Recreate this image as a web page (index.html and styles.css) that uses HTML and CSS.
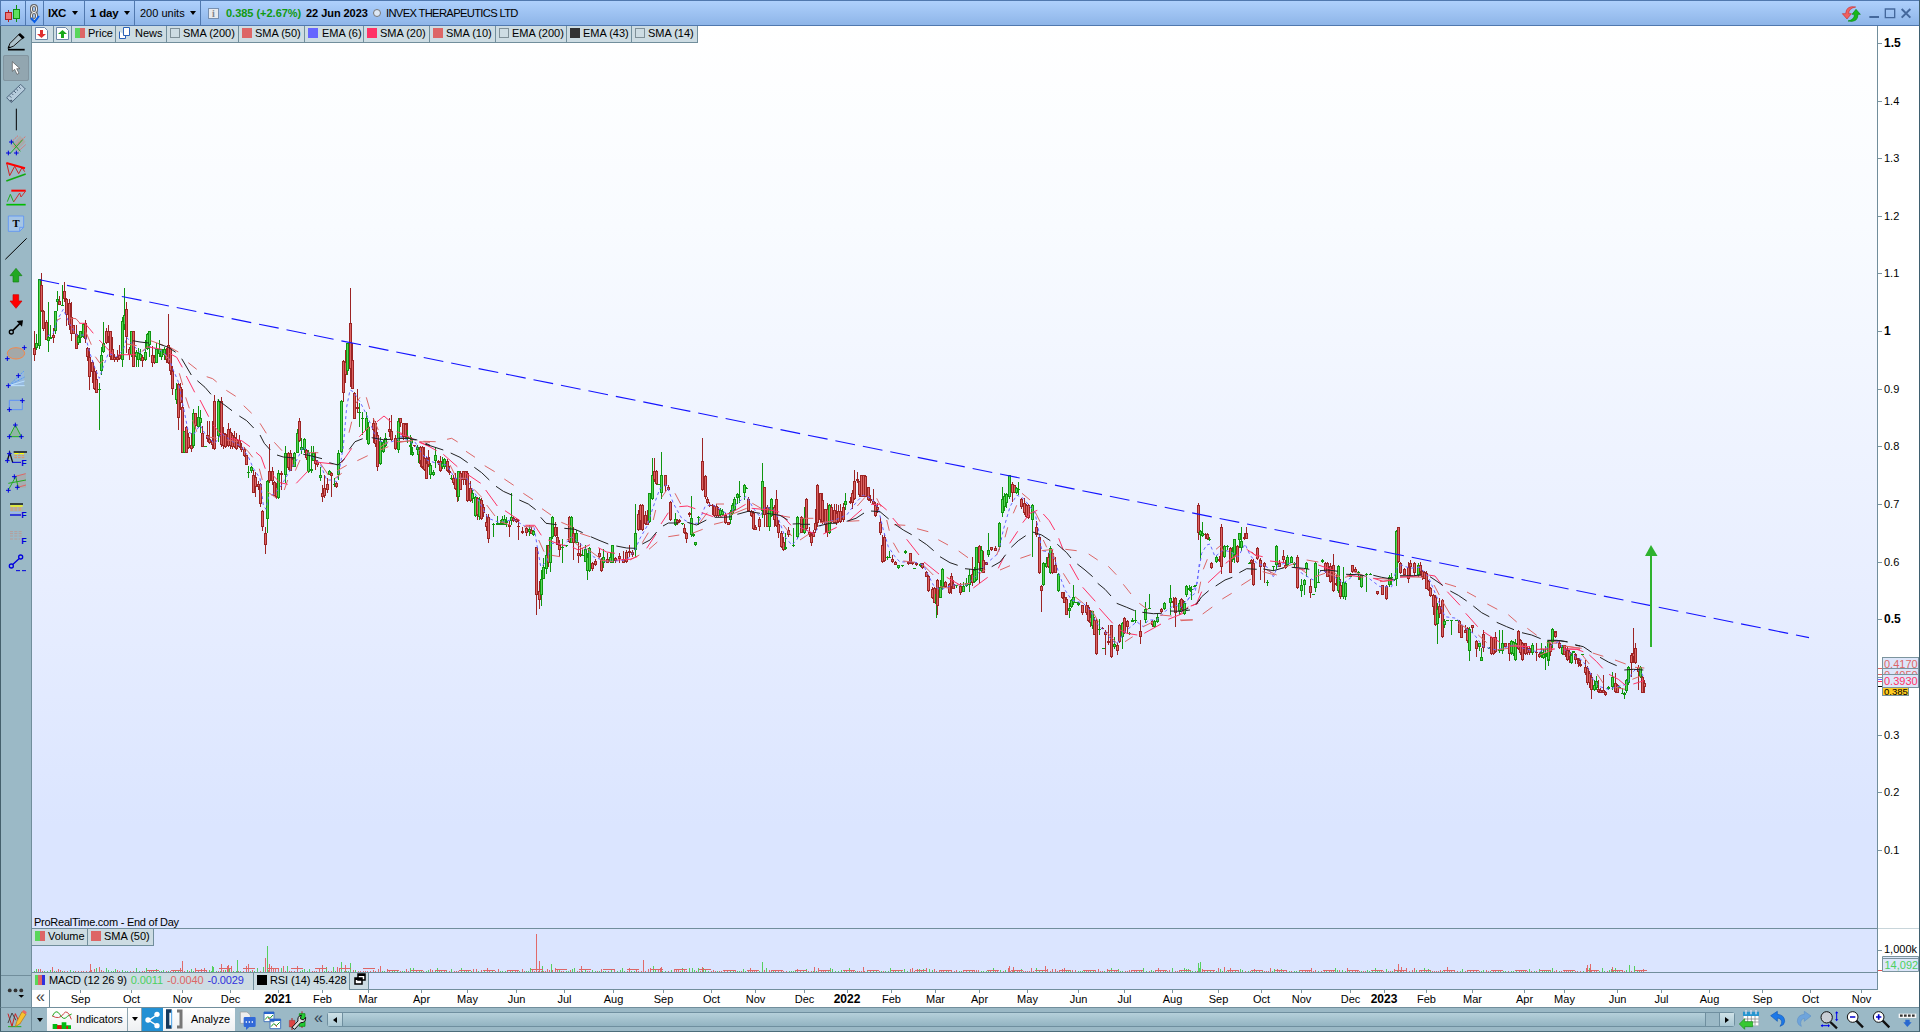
FILE: index.html
```html
<!DOCTYPE html>
<html lang="en">
<head>
<meta charset="utf-8">
<title>IXC - INVEX THERAPEUTICS LTD</title>
<link rel="stylesheet" href="styles.css">
</head>
<body>
<div class="window">
  <header class="titlebar">
    <div class="cell c-candle"><svg width="25" height="25" viewBox="0 0 25 25"><path d="M7.500 9v12" stroke="#b02020"/><path d="M15.500 4v17" stroke="#109010"/><rect x="4.500" y="11.500" width="6" height="7" fill="#ee7777" stroke="#b02020"/><rect x="12.500" y="8.500" width="6" height="9" fill="#5ee05e" stroke="#109010"/></svg></div>
    <div class="cell c-link"><svg width="18" height="25" viewBox="0 0 18 25"><g fill="none" stroke="#666" stroke-width="3"><rect x="5.500" y="4.500" width="5" height="7" rx="2.500"/><rect x="5.500" y="11.500" width="5" height="7" rx="2.500"/></g><g fill="none" stroke="#eee" stroke-width="1"><rect x="5.500" y="4.500" width="5" height="7" rx="2.500"/><rect x="5.500" y="11.500" width="5" height="7" rx="2.500"/></g><path d="M5 17l3.500 4L13 15" fill="none" stroke="#0b5fe8" stroke-width="2"/></svg></div>
    <div class="cell c-sym"><b class="sym">IXC</b><i class="caret"></i></div>
    <div class="cell c-period"><b>1 day</b><i class="caret"></i></div>
    <div class="cell c-units"><span>200 units</span><i class="caret"></i></div>
    <div class="quote"><span class="info">i</span><b class="change">0.385 (+2.67%)</b><b class="date">22 Jun 2023</b><i class="dot"></i><span class="company">INVEX THERAPEUTICS LTD</span></div>
    <div class="winbtns">
      <svg width="116" height="25" viewBox="0 0 348 75"><path d="M59 18Q31 12 29 38H19L33 54L46 38H38Q38 22 59 18" fill="#f06060" stroke="#c83030" stroke-width="2"/><path d="M36 60Q66 66 66 40H73L60 25L48 40H55Q56 56 36 60" fill="#18b818" stroke="#0a8a1a" stroke-width="2"/><path d="M100 48h29" stroke="#44689c" stroke-width="6"/><path d="M148 24h28v26h-28z" fill="none" stroke="#44689c" stroke-width="4"/><path d="M197 24l26 26M223 24l-26 26" stroke="#44689c" stroke-width="6"/></svg>
    </div>
  </header>
  <main class="workspace">
    <nav class="tools">
      <svg viewBox="0 0 96 78"><path d="M24 62h50" stroke="#000" stroke-width="5"/><path d="M24 58l6-15L56 17l11 11L41 51Z" fill="#aec3cc" stroke="#111" stroke-width="3"/><path d="M54 17l6-5 14 13-6 6Z"/><path d="M24 58l2-7 7 5Z"/></svg>
      <svg viewBox="9 0 78 78" class="active"><path d="M37 20v29l7-6 7 15 6-3-7-14h10Z" fill="#fff" stroke="#555" stroke-width="2"/></svg>
      <svg viewBox="0 0 96 78"><path d="M20 50L62 10l14 14L34 65Z" fill="#b6ccdc" stroke="#506880" stroke-width="3"/><path d="M28 44l6 6M35 37l5 5M42 30l6 6M49 24l5 5M56 17l6 6M33 57a2 2 0 1 0 1 0" stroke="#506880" stroke-width="3"/></svg>
      <svg viewBox="0 0 96 78"><path d="M49 5v65" stroke="#000" stroke-width="3"/></svg>
      <svg viewBox="0 0 96 78"><path d="M33 40L60 8 77 26 50 55Z" fill="#aaa"/><path d="M33 28L54 8M42 42L77 10M55 55L77 35" stroke="#e07070" stroke-width="3" stroke-dasharray="6 2"/><path d="M30 62L68 20M36 25l25 30" stroke="#22a822" stroke-width="3"/><path d="M34 20v14M27 27h14M25 53v14M18 60h14M49 53v14M42 60h14" stroke="#0000e0" stroke-width="3"/></svg>
      <svg viewBox="0 0 96 78"><path d="M20 12l9 38L44 22l12 22L66 26l8 12" fill="none" stroke="#c22" stroke-width="3"/><path d="M19 12l56 16" stroke="#f00" stroke-width="6"/><path d="M19 66l58-21" stroke="#1a1" stroke-width="5"/></svg>
      <svg viewBox="0 0 96 78"><path d="M34 17h43" stroke="#f00" stroke-width="6"/><path d="M19 59h58" stroke="#0b0" stroke-width="5"/><path d="M22 50l9-22 10 23" fill="none" stroke="#2a2" stroke-width="3"/><path d="M41 51l18-27 4 12 14-18" fill="none" stroke="#c33" stroke-width="3"/></svg>
      <svg viewBox="0 0 96 78"><path d="M25 15h46v34l-12 12H25Z" fill="#a5c5e5" stroke="#5d94f5" stroke-width="2.500"/><path d="M59 61V49h12" fill="none" stroke="#5d94f5" stroke-width="2.500"/><text x="48" y="49" class="tool-t">T</text></svg>
      <svg viewBox="0 0 96 78"><path d="M16 67L80 4" stroke="#000" stroke-width="3"/></svg>
      <svg viewBox="0 0 96 78"><path d="M48 16L66 38H56V57H39V38H30Z" fill="#22a822" stroke="#168016" stroke-width="2"/></svg>
      <svg viewBox="0 0 96 78"><path d="M48 58L30 36H39V17H56V36H66Z" fill="#f00" stroke="#c00" stroke-width="2"/></svg>
      <svg viewBox="0 0 96 78"><circle cx="34" cy="51" r="6" fill="none" stroke="#000" stroke-width="4"/><path d="M39 46L60 25" stroke="#000" stroke-width="5"/><path d="M50 18l19-2-3 19Z"/></svg>
      <svg viewBox="0 0 96 78"><ellipse cx="48" cy="37" rx="26" ry="17" fill="#a4a8a8" stroke="#f4874b" stroke-width="3"/><path class="plus" d="M73 13v14M66 20h14M22 46v14M15 53h14"/></svg>
      <svg viewBox="0 0 96 78"><path d="M26 56L72 11V56Z" fill="#94b8ea" opacity=".65"/><path d="M26 56L72 12M26 56L74 30" stroke="#5599f5" stroke-width="3" stroke-dasharray="7 3"/><path d="M26 56L74 42M26 56H74" stroke="#bce0ff" stroke-width="3"/><path class="plus" d="M55 19v14M48 26h14M25 49v14M18 56h14"/></svg>
      <svg viewBox="0 0 96 78"><path d="M28 22h39v28H28Z" fill="#9ebbd0" stroke="#5f91f5" stroke-width="3"/><path class="plus" d="M67 16v14M60 23h14M28 43v14M21 50h14"/></svg>
      <svg viewBox="0 0 96 78"><path d="M46 18L64 53H28Z" fill="#8fb5a5" stroke="#22b022" stroke-width="3"/><path class="plus" d="M46 11v14M39 18h14M28 46v14M21 53h14M64 46v14M57 53h14"/></svg>
      <svg viewBox="0 0 96 78"><path d="M22 48L29 22 38 52" fill="none" stroke="#111" stroke-width="4"/><path d="M41 21h40" stroke="#000" stroke-width="4"/><path d="M43 26h33" stroke="#ff0" stroke-width="4" stroke-dasharray="13 3"/><path d="M43 32h33M43 38h33" stroke="#e49560" stroke-width="3" stroke-dasharray="8 3"/><path d="M36 52h27" stroke="#00d" stroke-width="3"/><path class="plus" d="M28 19v14M21 26h14M22 40v14M15 47h14"/><text class="tool-f" x="64" y="63">F</text></svg>
      <svg viewBox="0 0 96 78"><path d="M45 17L78 7V50L50 50Z" fill="#aaa" opacity=".7"/><path d="M43 17L77 8M50 50L78 42" stroke="#d66" stroke-width="3"/><path d="M25 57L47 17 55 50M25 37L78 27" fill="none" stroke="#22a822" stroke-width="3"/><path class="plus" d="M43 10v14M36 17h14M25 51v14M18 58h14M52 42v14M45 49h14"/></svg>
      <svg viewBox="0 0 96 78"><path d="M30 21h39" stroke="#000" stroke-width="4"/><path d="M31 27h37" stroke="#ff0" stroke-width="4"/><path d="M31 33h37M31 39h37" stroke="#f09550" stroke-width="3" stroke-dasharray="9 3"/><path d="M30 47h32" stroke="#9cb2ff" stroke-width="3"/><path d="M30 54h33" stroke="#00d" stroke-width="4"/><text class="tool-f" x="64" y="64">F</text></svg>
      <svg viewBox="0 0 96 78"><path d="M30 26h39M30 32h39M30 39h39M30 48h30" stroke="#b79d98" stroke-width="3" stroke-dasharray="9 4"/><text class="tool-f" x="64" y="63">F</text></svg>
      <svg viewBox="0 0 96 78"><g fill="none" stroke="#00d" stroke-width="4"><circle cx="34" cy="51" r="6"/><circle cx="62" cy="24" r="6"/><path d="M39 46L57 29"/></g><path d="M48 65h12m6 0h12" stroke="#00d" stroke-width="3"/></svg>
      <div class="more"><svg viewBox="0 0 96 100"><g fill="#333"><circle cx="30" cy="45" r="6"/><circle cx="48" cy="45" r="6"/><circle cx="66" cy="45" r="6"/></g><path d="M57 59h18l-9 9Z"/></svg></div>
    </nav>
    <section class="charts">
      <div class="panel price">
        <svg id="price" width="1845" height="903" viewBox="32 26 1845 903"></svg>
        <div class="legend">
          <span class="key w22"><svg width="13" height="13"><path d="M.5.500h9l3 3v9H.5Z" fill="#fff" stroke="#6d87a8"/><path d="M5 3h3v4h3L6.500 11 2 7h3Z" fill="#e03030"/></svg></span>
          <span class="key w18"><svg width="13" height="13"><path d="M.5.500h9l3 3v9H.5Z" fill="#fff" stroke="#6d87a8"/><path d="M5 11h3V7h3L6.500 3 2 7h3Z" fill="#18a818"/></svg></span>
          <span class="key w44"><i class="sw split"></i>Price</span>
          <span class="key w51"><svg width="11" height="13"><path d="M4.500.500h6v8h-6zM.5 4.500v7h6v-3" fill="#fff" stroke="#2a62b8"/></svg>News</span>
          <span class="key w72"><i class="sw none"></i>SMA (200)</span>
          <span class="key w66"><i class="sw salmon"></i>SMA (50)</span>
          <span class="key w58"><i class="sw blue"></i>EMA (6)</span>
          <span class="key w66"><i class="sw pink"></i>SMA (20)</span>
          <span class="key w66"><i class="sw salmon"></i>SMA (10)</span>
          <span class="key w71"><i class="sw none"></i>EMA (200)</span>
          <span class="key w65"><i class="sw dark"></i>EMA (43)</span>
          <span class="key w66"><i class="sw none"></i>SMA (14)</span>
        </div>
        <div class="credit">ProRealTime.com - End of Day</div>
      </div>
      <div class="axis price-axis"><svg id="priceAxis" width="41" height="903" viewBox="1878 26 41 903"></svg></div>
      <div class="panel volume">
        <svg id="volume" width="1845" height="44" viewBox="32 929 1845 44"></svg>
        <div class="legend">
          <span class="key w56"><i class="sw split"></i>Volume</span>
          <span class="key w66"><i class="sw salmon"></i>SMA (50)</span>
        </div>
      </div>
      <div class="axis vol-axis"><svg width="41" height="44" viewBox="1878 929 41 44"><path d="M1878 950.500h4" stroke="#7b949e"/><text x="1884" y="953" class="lbl">1,000k</text><path d="M1878 970.500h4" stroke="#e05050"/><path d="M1882.500 956.500h36v15h-36z" fill="#dde6fa" stroke="#7b949e"/><path d="M1882 958.500h37" stroke="#7b949e"/><text x="1884.500" y="969" class="lbl gr">14,092</text></svg></div>
      <div class="panel collapsed">
        <div class="legend">
          <span class="key macd"><i class="sw tri"></i>MACD (12 26 9)<em class="v1">0.0011</em><em class="v2">-0.0040</em><em class="v3">-0.0029</em></span>
          <span class="key rsi"><i class="sw black"></i>RSI (14) 45.428</span>
          <span class="key w19"><svg width="14" height="13"><path d="M5 1h7v6H5zM2 5h7v6H2z" fill="#fff" stroke="#000" stroke-width="1.500"/><path d="M5 2h7M2 6h7" stroke="#000" stroke-width="2"/></svg></span>
        </div>
      </div>
      <div class="axis"></div>
      <div class="timeaxis"><span class="collapse">«</span><svg id="timeAxis" width="1869" height="17" viewBox="50 990 1869 17"></svg></div>
    </section>
  </main>
  <footer class="bottombar">
    <div class="b-pencil"><svg width="32" height="25" viewBox="0 0 96 75"><path d="M24 59h40" stroke="#2a2" stroke-width="3"/><path d="M24 20l12 38L46 20 60 50" fill="none" stroke="#c22" stroke-width="3"/><path d="M24 48L36 18 48 40" fill="none" stroke="#444" stroke-width="3"/><path d="M46 59l4-15L66 14l12 8L60 50Z" fill="#f8c030" stroke="#b07010" stroke-width="2"/><path d="M66 14l12 8 2-7-9-6Z" fill="#e66"/></svg></div>
    <div class="b-caret gray"><i class="caret"></i></div>
    <div class="b-white ind"><svg width="20" height="22" viewBox="0 0 60 66"><path d="M1 25Q12 0 24 20T46 25L59 18" fill="none" stroke="#2a2" stroke-width="3"/><path d="M1 24Q22 36 34 18T58 34" fill="none" stroke="#c44" stroke-width="3"/><path d="M2 48h14v4h13v-9h14v9h14v11H2Z" fill="#0b1"/><path d="M15 52h14v11H15zM43 54h5v9h-5z" fill="#d11"/></svg><span>Indicators</span></div>
    <div class="b-white b-caret2"><i class="caret"></i></div>
    <div class="b-share"><svg width="21" height="25" viewBox="0 0 63 75"><path d="M44 21L20 37 44 52" fill="none" stroke="#fff" stroke-width="4"/><circle cx="45" cy="19" r="8"/><circle cx="18" cy="36" r="8"/><circle cx="45" cy="53" r="8"/></svg></div>
    <div class="b-white ana"><svg width="20" height="20" viewBox="0 0 60 60"><path d="M20 6H8v48h12" fill="none" stroke="#16395c" stroke-width="10"/><path d="M20 4v52" stroke="#45a0e8" stroke-width="3"/><path d="M36 6h12v48H36" fill="none" stroke="#777" stroke-width="9"/></svg><span>Analyze</span></div>
    <svg width="78" height="25" viewBox="707 0 234 75"><path d="M723 12h20l10 9v25h-30Z" fill="#eee" stroke="#999" stroke-width="2"/><path d="M737 27h29q3 0 3 4v22q0 4-5 4h-14l-10 9v-9h-3q-4 0-4-4V31q0-4 4-4Z" fill="#3269d8"/><path d="M739 42h22" stroke="#fff" stroke-width="4" stroke-dasharray="4 5"/><path d="M794 12h30v29h-30zM812 33h32v29h-32z" fill="#fff" stroke="#4575be" stroke-width="3"/><path d="M794 15h30M812 36h32" stroke="#2864cb" stroke-width="6"/><path d="M797 35l8-9 7 5 9-10M815 56l8-9 8 6 10-10" fill="none" stroke="#1a9a20" stroke-width="3"/><path d="M807 30l4 4M828 51l5 5" stroke="#c22" stroke-width="3"/><path d="M878 30v36M908 10v50" stroke="#a22" stroke-width="3"/><path d="M870 37h17v20h-17z" fill="#d44" stroke="#822"/><path d="M900 17h17v38h-17z" fill="#24cb35" stroke="#080" stroke-width="2"/><path d="M878 58l18-19q-3-13 10-18l-3 11 9 4 7-8q1 17-15 16l-18 20Z" fill="#ddd" stroke="#111" stroke-width="3"/></svg>
    <span class="dbl">«</span>
    <div class="scroll"><span class="sbtn left"></span><span class="thumb"></span><span class="track"></span><span class="sbtn right"></span></div>
    <svg class="actions" width="184" height="25" viewBox="105 3 552 75"><g><path d="M130 14h46v42h-46z" fill="#fff" stroke="#889"/><path d="M129 14h48v13h-48z" fill="#2795cf"/><path d="M138 9v13M153 9v13M168 9v13" stroke="#dde" stroke-width="4"/><path d="M130 36h46M130 45h46M143 27v28M154 27v28M165 27v28" stroke="#777" stroke-width="2"/><path d="M118 51l16-16v9h24v15h-24v8Z" fill="#37c832" stroke="#168c16" stroke-width="2"/></g><path d="M212 26L232 13V22Q254 24 254 43 253 55 240 58 247 49 245 42 242 33 232 33V43Z" fill="#1d79e8" stroke="#1059b9" stroke-width="2"/><path d="M333 27L313 13V22Q292 24 292 43 293 54 304 58 300 49 303 42 306 34 313 34V43Z" fill="#6ea4dc" stroke="#5f92c9" stroke-width="2"/><g stroke="#111"><path d="M391 45l20 19M469 41l20 20M548 41l20 20" stroke-width="7"/><g stroke-width="3" fill="#fff"><circle cx="380" cy="31" r="17" fill="#c9ced5"/><circle cx="458" cy="30" r="16"/><circle cx="536" cy="30" r="16"/></g></g><path d="M450 30h16M528 30h16M536 22v16" stroke="#00c" stroke-width="5"/><g stroke="#0000ee" fill="#0000ee" stroke-width="3"><path d="M410 15v24M364 56h23"/><path d="M405 19l5-6 5 6ZM405 37l5 6 5-6ZM368 51l-6 5 6 5ZM384 51l6 5-6 5Z" stroke="none"/></g><path d="M596 20h53v13h-53z" fill="#f5f5f5"/><path d="M600 26h46" stroke="#333" stroke-width="7" stroke-dasharray="8 4"/><path d="M616 38h13v8h6L622 60 610 46h6Z" fill="#2868d0"/></svg>
  </footer>
</div>
<script src="chart.js"></script>
</body>
</html>
```

FILE: styles.css
```css
* { box-sizing: border-box; }
body { margin: 0; width: 1920px; height: 1032px; overflow: hidden; font: 11px "Liberation Sans", Arial, sans-serif; color: #000; }
i, em { font-style: normal; }
svg { display: block; flex: none; }
.window { display: flex; flex-direction: column; width: 1920px; height: 1032px; border-right: 1px solid #3f6070; border-bottom: 1px solid #4c6d7a; background: #fff; }
.titlebar { display: flex; height: 26px; flex: none; background: linear-gradient(#aed0fc, #8eb5e8); border-top: 1px solid #5078ae; border-bottom: 1px solid #5078ae; border-left: 1px solid #5078ae; font-size: 11px; line-height: 24px; }
.cell { display: flex; align-items: center; justify-content: space-between; border-right: 1px solid #5078ae; padding: 0 7px 0 5px; height: 24px; white-space: nowrap; }
.c-candle { width: 25px; padding: 0; }
.c-link { width: 18px; padding: 0; }
.c-sym { width: 41px; padding: 0 6px 0 4px; }
.c-period { width: 50px; padding-right: 4px; }
.c-units { width: 66px; padding-right: 4px; }
.sym { letter-spacing: -.4px; font-size: 11.5px; }
.c-period b { font-size: 11.5px; letter-spacing: -.2px; }
.caret { width: 0; height: 0; border: 3.5px solid transparent; border-top: 4px solid #000; border-bottom: 0; }
.quote { display: flex; align-items: center; flex: 1; padding-left: 7px; white-space: nowrap; }
.info { width: 11px; height: 11px; border: 1px solid #7890b0; background: #e8eaee; color: #7f858d; font: bold 10px/10px "Liberation Serif", serif; text-align: center; }
.change { color: #109a10; margin-left: 7px; width: 80px; font-size: 11px; letter-spacing: -.02px; }
.date { width: 65px; letter-spacing: -.05px; }
.dot { width: 8px; height: 8px; border: 1px solid #777; border-radius: 50%; background: #dde8f5; margin: 0 5px 0 2px; }
.company { letter-spacing: -.66px; font-size: 11.2px; }
.winbtns { width: 83px; display: flex; overflow: hidden; }
.workspace { display: flex; height: 981px; flex: none; }
.tools { display: flex; flex-direction: column; width: 32px; flex: none; padding-top: 2.5px; background: #9bb9c6; border-left: 1px solid #45606c; border-right: 1px solid #718e9c; }
.tools > svg { width: 32px; height: 26px; margin-left: -1px; }
.tools > .active { width: 26px; margin-left: 2px; outline: 1px solid #8295a0; outline-offset: -1px; border-radius: 2px; background: #92a6b0; }
.tool-t { font: bold 32px "Liberation Serif", serif; text-anchor: middle; }
.tool-f { font: bold 26px "Liberation Sans", sans-serif; fill: #0000dd; }
.plus { stroke: #0000e0; stroke-width: 3px; fill: none; }
.more { margin-top: auto; height: 32px; border-top: 1px solid #718e9c; width: 30px; }
.more svg { width: 31px; height: 32px; margin-left: -1px; }
.charts { display: grid; grid-template-columns: 1846px 41px; grid-template-rows: 903px 44px 17px 17px; width: 1887px; background: #fff; }
.panel { position: relative; border-right: 1px solid #718e9c; border-bottom: 1px solid #718e9c; }
.price { background: linear-gradient(#fff 0, #f8fbff 200px, #e8eeff 560px, #dbe5ff 800px); }
.volume, .collapsed { background: #dbe5ff; }
.vol-axis, .price-axis { overflow: hidden; }
.price-axis { border-bottom: 1px solid #c8d5da; }
.legend { position: absolute; left: 0; top: 0; display: flex; height: 17px; white-space: nowrap; }
.key { display: flex; align-items: center; gap: 5px; height: 17px; padding: 0 0 2px 3px; background: #cddce3; border-right: 1px solid #718e9c; border-bottom: 1px solid #718e9c; letter-spacing: -.02px; }
.w22 { width: 22px; padding-left: 3px; }
.w18 { width: 18px; padding-left: 2px; }
.w44 { width: 44px; gap: 3px; }
.w51 { width: 51px; }
.w72 { width: 72px; gap: 3px; }
.w66 { width: 66px; gap: 3px; }
.w58 { width: 59px; gap: 4px; }
.w71 { width: 71px; gap: 3px; }
.w65 { width: 65px; gap: 3px; }
.w56 { width: 56px; gap: 3px; }
.w19 { width: 19px; }
.macd { width: 222px; gap: 4px; border-bottom: 0; letter-spacing: -.12px; }
.rsi { width: 96px; gap: 3px; border-bottom: 0; letter-spacing: -.08px; }
.macd, .rsi, .w19 { padding-bottom: 3px; }
.v1 { color: #4cd060; }
.v2 { color: #dd6666; }
.v3 { color: #3030dd; }
.sw { width: 10px; height: 10px; flex: none; }
.none { border: 1px solid #7f9098; }
.salmon { background: #dd6666; }
.blue { background: #6666ff; }
.pink { background: #ff3366; }
.dark { background: #333; }
.black { background: #000; }
.split { background: linear-gradient(90deg, #5ad65a 50%, #dd6666 50%); }
.tri { background: linear-gradient(90deg, #5ad65a 33%, #dd6666 33% 66%, #3030dd 66%); }
.credit { position: absolute; left: 2px; bottom: 0; font-size: 11px; letter-spacing: -.25px; line-height: 12px; }
.timeaxis { grid-column: 1 / 3; display: flex; }
.collapse { width: 18px; height: 17px; border-right: 1px solid #718e9c; font-size: 16px; line-height: 14px; text-align: center; color: #444; }
.lbl { font: 11px "Liberation Sans", Arial, sans-serif; }
.tm { font: 11px "Liberation Sans", Arial, sans-serif; text-anchor: middle; }
.bold { font-weight: bold; font-size: 12px; }
.gr { fill: #4cd060; }
.bottombar { display: flex; height: 24px; flex: none; background: #9bb9c6; border-top: 1px solid #718e9c; border-left: 1px solid #45606c; }
.b-pencil { width: 31px; height: 24px; overflow: hidden; border-right: 1px solid #718e9c; }
.b-pencil svg { margin: -1px 0 0 -1px; }
.b-caret { width: 15px; display: flex; align-items: center; justify-content: center; }
.b-white { display: flex; align-items: center; background: linear-gradient(#fff, #eef0f2); border-right: 1px solid #8fa5b0; padding-bottom: 1px; }
.ind { width: 81px; padding-left: 5px; gap: 4px; letter-spacing: -.1px; }
.b-caret2 { width: 14px; justify-content: center; }
.b-share { width: 21px; background: #2290d4; fill: #fff; overflow: hidden; }
.ana { width: 72px; padding-left: 2px; gap: 6px; border-right: 0; }
.dbl { width: 10px; font-size: 16px; line-height: 19px; color: #345; text-align: right; }
.scroll { display: flex; width: 1408px; height: 15px; margin: 4px 0 0 4px; border: 1px solid #6f8f9f; border-radius: 3px; background: #9bb9c6; }
.sbtn { width: 15px; display: flex; align-items: center; justify-content: center; background: linear-gradient(#cfe2e8, #a9c7d3); }
.left { border-right: 1px solid #6f8f9f; }
.right { border-left: 1px solid #6f8f9f; }
.sbtn::before { content: ""; border: 3px solid transparent; }
.left::before { border-right: 4px solid #000; border-left: 0; }
.right::before { border-left: 4px solid #000; border-right: 0; }
.thumb { flex: 1; background: linear-gradient(#b5d0da, #93b4c2); border-right: 1px solid #6f8f9f; }
.track { width: 13px; }
.actions { margin-left: auto; }
```

FILE: chart.js
```js
// Chart data. Every block has a pixel origin; its values are in thirds of a pixel.
// Candles: colour, x, high, body top, body bottom, low.
const blocks = [
{ ox: 30, oy: 260,
c: `r13,212,264,284,303 g19,222,250,264,270 g28,57,57,258,268 r34,38,76,154,155 r40,150,154,206,214 r49,180,186,240,240 g55,125,232,242,275 g61,195,230,236,238 r70,205,224,234,250 g76,152,154,214,222 g82,92,118,126,152 r89,108,122,136,136 g97,75,134,136,138 r103,66,94,118,125 r109,115,118,164,197 r118,118,128,196,210 r124,126,170,222,242 r130,195,195,222,222 r139,195,222,266,266 g145,225,230,250,256 g151,212,214,234,250 g160,188,192,232,234 r166,180,188,236,250 r172,262,265,292,302 r178,265,290,352,390 r187,300,305,336,370 r193,318,334,388,390 r199,330,356,398,398 g208,370,388,390,510 g214,262,284,334,345 g220,186,250,276,278 r229,205,214,248,252 r235,196,214,230,248 r241,214,214,292,300 r247,230,266,300,300 r253,282,292,300,306 r262,270,290,300,306 r268,256,284,298,300 g277,172,182,300,320 g283,84,164,196,210 r289,125,146,232,280 r298,260,268,284,300 g304,212,214,284,290 r310,214,214,320,320 g319,270,276,292,320 g325,265,278,300,320 g331,268,282,298,302 r337,284,290,302,320 g346,240,276,300,302 g352,220,222,268,270 g358,212,214,256,290 r367,258,284,310,320 r373,284,290,310,312 g379,250,266,308,310 g388,240,266,282,292 g394,266,266,290,300 g403,262,268,284,300 r409,264,282,300,308 r415,162,256,310,312 r421,262,264,334,345 r427,318,334,388,406 g439,370,388,420,432 r445,370,372,474,510 r451,370,380,430,450 r457,388,440,578,578 g463,514,514,578,578 r469,498,500,578,578 r475,520,532,564,566 r484,520,556,568,575 g490,448,458,558,565 r496,458,458,498,508 g505,438,470,500,505 g511,450,474,490,520 r517,498,518,560,560 g526,558,558,561,561 r532,484,524,536,545 r538,482,536,550,552 r547,484,540,555,568 r553,404,422,568,570 g565,418,422,528,545 r574,412,422,555,560 r580,500,518,558,568 r586,518,522,560,564 r595,490,508,558,560 r601,505,516,558,566 r607,520,524,560,568 r613,514,530,562,564 r619,520,536,568,570 r628,525,540,560,564 r634,550,560,570,575 r643,560,568,588,590 r649,585,586,614,616 g655,618,636,638,655 g664,618,622,634,640 r670,630,646,700,700 r676,636,650,680,712 r685,664,672,682,690 r691,670,672,732,742 r697,750,752,802,812 r706,800,820,856,882 g712,660,664,778,820 r718,552,632,664,670 r727,620,632,664,676 r733,664,666,708,708 r739,670,682,712,718 g745,630,638,714,716 r754,632,638,646,690 g766,558,578,646,668 r775,576,578,625,630 r781,570,578,632,632 r787,590,596,620,622 g793,576,578,622,622 g802,507,518,578,578 r808,474,484,542,545 g814,534,560,570,582 g823,534,538,570,580 r829,566,570,594,600 g835,570,580,636,638 g844,558,628,634,638 g850,558,578,602,604 r856,575,600,612,630 r862,600,606,614,622 g871,620,645,654,664 r877,675,700,710,725 r883,645,684,708,714 r892,655,672,690,700 g898,630,634,645,646 r904,636,638,648,710 g913,655,672,675,680 r919,665,670,682,684 g925,570,578,644,660 g934,420,422,576,580 r940,300,302,398,425 r946,270,305,345,370 g952,250,250,332,345 r961,84,188,328,380 r967,250,300,388,388 r973,395,398,476,476 r982,388,440,448,460 g988,430,456,458,500 g997,456,474,476,526 g1009,456,474,510,540 g1015,486,500,552,556 r1030,474,490,510,550 r1036,484,490,552,560 r1042,516,525,622,632 g1051,530,542,612,615 g1060,540,545,576,580 g1066,520,535,558,562 r1078,474,508,516,530 r1084,465,514,540,542 r1096,525,535,566,570 g1105,474,484,570,578 r1111,474,474,488,500 r1120,488,490,520,522 r1129,490,490,532,534 g1144,530,538,550,582 g1147,560,576,586,588 g1162,556,560,570,585 r1168,560,570,605,612 r1174,560,585,622,625 r1180,580,586,628,630 r1189,590,604,656,656 r1196,570,590,604,620`,
e: `308,242 330,246 357,249|387,252 415,262 437,277|455,296 468,318 484,345|502,362 525,382 543,403|563,420 585,436 606,452|628,468 650,482 671,504|690,525 703,550 721,570|741,585 760,591 795,594|820,583 845,588 876,596|898,608 924,615 944,596|958,568 975,545 998,536|1025,533 1060,539 1082,538|1105,535 1140,535 1162,540|1187,550 1200,556`,
s: `362,242 400,256|420,262 445,276|475,308 500,328|530,350 548,356 560,366|589,391 617,409|641,437 665,460|690,490 709,520|733,547 756,572|835,578 865,578|922,632 950,616|982,602 1013,587|1050,562 1075,545|1100,545 1145,543|1170,545 1200,547|82,180 92,175|120,174 138,176 150,190|165,210 184,254|196,290 210,310 222,300|290,252 320,257|335,275 350,262|400,280 420,300|448,340 458,375|467,412 478,445|488,480 500,515|530,530 560,535|590,540 625,545|640,560 655,575 668,592|688,626 697,660|712,695 740,715|763,690 773,660|796,632 810,600|870,608 895,645|915,655 935,640|957,518 965,485|978,430 990,412|1009,412 1019,447|1030,475 1045,510|1050,570 1075,560`,
p: `148,190 165,190 190,220|208,240 228,262 250,284|265,284 318,284|350,260 395,268|418,280 440,292 457,322|469,348 494,397|510,420 536,470|550,495 575,525|600,535 635,542 660,560|678,577 693,590 706,626|728,645 750,668 773,673|799,670 835,632|857,606 910,612|935,608 965,565|988,530 1018,500|1040,486 1062,468 1083,486|1100,515 1130,525|1168,545 1200,560`,
b: `52,228 70,220 82,180 100,148 118,190 140,225 165,225 180,280 195,325 208,355 220,320 235,280 260,290 280,270 290,232 305,250 330,278 360,260 390,270 415,290 430,330 445,365 460,440 475,515 490,525 510,495 530,530 555,550 575,520 600,540 635,560 655,590 670,625 690,655 700,735 708,748 716,710 735,700 755,675 775,640 800,600 820,560 840,585 870,610 890,660 905,660 920,665 930,620 940,560 950,440 960,390 970,395 990,425 1010,465 1025,500 1040,540 1070,550 1100,540 1125,520 1150,540 1180,580 1200,600` },
{ ox: 400, oy: 410,
c: `r10,38,40,80,90 r16,40,42,82,84 g22,60,80,84,100 g31,75,104,110,135 g38,112,125,136,136 r43,104,104,108,112 g55,110,118,134,160 r61,108,110,154,160 r67,108,110,172,175 r73,110,145,180,182 r79,150,160,206,206 r85,136,150,165,170 g91,160,164,196,206 g100,180,186,196,198 g106,115,134,154,175 r115,150,154,160,165 r121,138,152,182,186 g127,142,158,172,178 g133,144,146,172,176 r142,148,154,184,186 r148,168,182,188,195 g154,196,205,207,210 r160,196,205,220,224 r166,190,205,236,240 r172,205,208,262,275 g175,182,184,262,274 r181,182,190,240,240 r190,182,184,210,225 r196,182,184,210,225 r202,182,190,274,275 r211,214,235,274,276 g217,240,250,266,280 g226,258,262,318,320 r232,260,264,314,330 g238,262,268,322,330 r244,264,270,328,330 r250,282,292,308,322 r259,312,336,352,364 r265,312,320,388,398 g280,340,343,346,380 g292,318,338,344,345 g300,330,340,344,345 g306,318,328,342,345 g313,316,328,344,346 g320,320,332,340,350 r327,334,345,350,382 g334,248,320,334,345 r341,318,324,332,335 r350,324,326,336,340 r355,328,348,352,390 r368,350,364,370,372 r380,350,354,370,378 g389,345,358,366,378 r394,350,360,372,372 g401,360,362,376,378 r409,410,412,554,615 r418,514,542,570,598 g424,480,508,554,588 g430,445,470,508,508 g439,405,434,476,492 r445,406,406,460,470 g451,380,382,458,485 g457,318,320,382,386 r466,335,352,378,380 r472,352,380,404,405 r478,390,406,420,440 g487,388,410,412,460 g499,405,406,408,410 r508,318,320,396,398 g514,318,320,398,398 r520,350,370,400,450 g529,360,370,398,400 r535,395,430,438,460 r541,400,432,438,440 g547,415,434,436,438 g556,405,418,455,456 g562,430,440,482,510 g568,410,415,482,486 r577,455,458,476,484 r586,446,454,466,468 r598,415,428,440,445 r604,444,446,484,486 g610,416,440,460,475 r622,430,446,458,460 g630,430,440,456,458 g637,406,406,458,460 r646,440,444,452,458 r658,430,438,446,458 r670,424,448,458,458 r679,420,425,456,458 r688,406,422,430,440 r697,420,425,434,440 g706,282,370,420,440 r715,300,312,360,362 r721,282,284,332,360 r727,282,284,360,362 r736,304,316,342,345 r742,300,330,344,346 g748,250,250,336,338 g757,145,196,266,270 r763,144,182,210,215 r769,180,184,222,224 g775,222,222,224,225 g784,125,196,250,266 r796,194,196,228,245 r805,225,232,240,242 r811,272,276,330,332 g826,310,326,345,348 r832,328,330,338,345 r838,328,330,336,338 g848,338,340,342,344 r853,342,354,368,372 r859,365,370,388,398 r868,305,308,314,320 g874,258,325,376,380 g880,370,372,378,380 g886,396,396,404,408 g896,318,320,322,345 r907,84,154,240,242 r916,196,198,262,266 r922,262,266,280,282 r928,275,284,288,290 r937,282,284,288,315 r943,284,288,318,320 r949,282,288,318,320 r955,290,296,318,320 g961,295,300,316,318 g968,298,302,316,318 r976,310,314,340,342 r985,335,336,344,345 g991,300,306,330,342 g997,280,284,312,314 g1003,260,266,300,302 g1012,250,252,264,282 g1018,212,258,260,280 g1033,222,226,250,270 g1040,232,233,235,236 r1045,262,268,304,306 r1054,300,304,318,320 r1060,304,310,358,360 r1066,345,350,360,360 r1078,320,326,350,362 g1087,160,214,304,325 r1093,230,232,316,352 r1102,285,290,350,352 g1108,290,296,352,362 g1114,264,266,318,320 r1123,286,290,330,350 r1129,240,268,348,352 r1135,330,342,370,384 r1144,364,370,412,414 r1150,380,396,420,422 g1156,370,412,416,420 r1165,352,360,376,382 g1180,355,405,407,410 g1192,318,320,380,388`,
e: `0,85 25,85 47,90|75,102 105,112 130,120|152,129 180,142 203,158|223,172 245,188 268,210|288,229 310,244 337,256|358,270 385,282 407,299|422,322 438,340 470,344|493,355 525,358 548,368|572,380 600,392 625,402|649,408 680,414 706,415|727,402 750,390 770,366|789,348 805,339 836,339|862,337 890,345 919,330|944,322 970,322 996,320|1012,313 1045,304 1080,310|1100,310 1140,316 1163,330|1178,342 1200,341`,
s: `0,97 40,90|70,94 107,95|141,88 155,85 173,96|198,124 225,142|254,167 284,185|313,207 341,226|370,250 399,269|426,296 453,315|484,337 515,350|540,370 570,380|600,450 640,455|690,450 718,435|727,398 745,368|747,418 772,396|760,330 767,300|785,262 800,240|825,250 842,282|805,380 838,375|877,370 908,358|942,343 970,336|990,315 1040,295|1057,280 1083,295|1130,315 1170,322|948,282 972,282|898,340 922,308|150,165 165,195|175,205 195,205|222,238 245,262|260,285 285,318|300,335 330,345|372,350 403,350|416,390 432,425|455,436 480,440|500,390 515,380|525,398 550,420|560,415 600,445|1150,345 1175,378`,
p: `0,72 20,78 38,86|58,97 85,108 110,122|130,133 172,170|195,188 242,220|257,240 292,288|315,302 360,332|376,346 404,346 424,376|445,390 470,400 498,408|518,412 535,420 570,404|595,413 620,426 645,430|650,450 690,448 712,440|740,415 768,372|783,342 805,308|838,290 862,288 886,296|905,308 940,320|960,320 1000,305 1037,283|1055,295 1110,300 1138,306|1145,315 1173,346`,
b: `0,78 30,95 55,115 80,150 110,160 140,165 165,205 200,205 225,250 245,290 265,325 300,338 340,328 380,352 402,350 412,410 422,470 440,455 455,400 475,400 490,408 515,380 545,405 580,440 620,455 680,450 705,420 720,385 740,350 760,290 780,235 800,225 820,280 845,325 870,340 895,340 915,290 935,282 970,305 990,315 1010,280 1040,258 1060,295 1080,320 1095,290 1120,298 1135,325 1155,380 1175,405 1190,390 1200,370` },
{ ox: 800, oy: 440,
c: `r3,228,230,280,280 g13,200,235,280,282 r19,174,176,268,270 r28,262,275,286,290 r34,275,285,308,318 r40,270,275,290,292 r46,208,248,270,278 r52,132,134,250,262 r61,158,160,240,248 r67,160,180,245,252 r76,206,208,255,280 r82,190,208,278,290 g87,192,194,280,282 r93,192,200,246,250 r103,192,210,250,250 r109,192,220,248,256 r115,194,212,246,250 r121,192,214,246,250 r130,190,200,240,245 g136,158,184,194,210 r151,172,184,190,192 r157,150,160,190,206 r163,90,124,178,180 r172,95,116,122,130 r178,128,124,164,170 r184,105,106,170,170 r190,105,106,172,172 r196,105,108,170,172 r205,140,142,180,182 r211,165,176,184,190 r220,148,182,192,194 r226,185,194,228,232 r232,190,200,210,220 r241,230,245,280,284 r247,285,316,366,368 r253,282,292,364,366 g262,348,350,354,360 g268,332,350,352,354 r277,345,358,366,368 r286,362,366,374,376 g295,375,376,384,388 g308,375,376,378,380 g316,330,332,340,342 r325,362,366,372,374 r331,340,340,370,372 r337,365,366,372,374 g344,384,385,387,388 r349,365,368,376,378 g360,368,372,378,380 r367,368,370,384,388 r379,392,395,410,412 r385,405,408,452,456 r397,440,446,474,476 r403,442,444,488,490 g409,442,462,492,534 r412,418,420,498,525 g421,420,440,474,475 g427,384,386,442,450 r436,424,426,440,445 r448,430,432,460,462 r454,400,408,440,462 r460,420,432,446,448 g470,434,436,438,445 r481,430,438,460,464 g490,426,438,455,456 g499,415,430,438,440 g508,386,404,434,455 r517,350,402,430,438 g523,380,390,425,430 g529,320,322,420,422 r538,316,318,370,428 g544,318,330,392,396 r550,332,360,400,400 r560,365,367,374,375 g565,280,330,345,350 r574,320,322,330,334 r586,318,324,332,334 g598,246,250,320,330 g607,142,176,220,230 g613,160,168,200,212 g619,158,162,190,204 g628,105,106,172,178 r637,125,132,158,185 r643,134,136,158,160 g649,142,144,158,162 g655,125,146,150,165 r664,175,176,200,208 r673,175,190,220,225 r679,192,194,232,235 r685,192,196,234,238 g697,192,194,240,350 r709,244,262,286,292 r718,284,290,400,402 r724,435,438,454,516 g730,366,368,436,438 g739,352,368,380,385 r745,340,350,380,385 g751,318,324,400,402 r757,330,340,400,402 r766,352,376,400,400 g775,400,402,452,455 r787,455,456,474,476 r793,456,470,488,490 r799,470,478,524,526 g808,490,504,514,534 g814,476,480,502,505 g820,434,470,490,496 g830,485,486,488,490 g835,485,488,496,498 r847,494,496,520,524 r859,485,494,520,524 r865,495,500,542,545 r871,510,530,550,560 g877,512,514,558,568 r883,530,540,584,585 r889,535,540,642,644 g898,538,566,568,585 r907,562,563,566,566 g910,623,624,626,628 r916,570,575,584,645 r925,556,602,610,616 r934,556,556,652,654 g944,590,612,622,628 r952,610,616,632,645 r958,552,556,606,608 g967,545,548,590,626 r973,530,534,578,582 r982,540,544,560,582 g988,575,578,582,585 g996,535,540,546,546 g1006,510,540,544,548 r1022,540,574,592,612 g1036,485,506,540,550 g1048,462,505,506,508 r1058,540,542,556,560 g1064,540,544,560,565 g1072,522,530,546,548 r1084,505,508,516,520 g1093,485,488,508,510 g1111,435,474,488,525 r1120,472,484,490,505 r1126,472,474,520,560 g1138,480,490,514,526 r1147,476,480,500,512 g1153,485,488,505,510 g1160,436,438,460,470 g1172,440,446,452,455 g1185,435,436,438,440 r1195,190,194,278,300`,
e: `0,253 30,253|55,258 90,250 112,250|140,244 168,235 192,219|213,213 240,215 266,237|285,253 310,270 335,284|356,298 380,314 401,332|420,350 450,368 473,376|495,386 525,389 550,385|575,380 600,366 617,344|634,322 655,302 677,287|698,276 725,285 751,302|772,313 800,338 813,354|832,372 855,390 878,410|893,430 915,448 933,468|950,490 980,502 1004,512|1027,517 1060,521 1085,520|1110,513 1140,514 1170,510|1187,492 1200,480`,
s: `0,235 40,235|60,248 110,242|145,244 178,242|230,175 243,200|282,254 316,256|351,266 385,275|415,299 444,315|476,333 504,353|600,390 630,377|661,355 692,344|725,332 760,328|796,328 830,332|866,342 893,360|925,379 949,404|970,433 993,462|1018,490 1045,510|1080,525 1115,528|1143,542 1178,539|0,300 30,280|172,198 195,172|260,240 268,272|280,308 297,338|310,363 345,367|370,375 400,405|420,440 450,445|470,435 510,430|540,400 556,390|590,345 600,320|615,292 623,262|640,220 650,196|666,160 690,180|705,215 720,245|730,300 740,322|755,330 765,360|790,400 810,432|825,470 850,490|875,510 895,545|920,575 950,610|975,605 998,590|1030,560 1060,545`,
p: `0,262 45,282|70,282 110,262|145,244 186,208|213,193 240,193 260,210|278,234 302,262|320,298 357,345|372,366 417,402|440,412 480,435|520,444 563,412|595,385 612,350|629,310 653,274|668,248 690,220 712,211|730,222 748,242 764,270|776,295 790,330|809,372 836,420|848,442 886,484|898,505 938,550|960,570 980,580 1012,585|1033,580 1083,552|1105,538 1150,520|1172,498 1195,490`,
b: `0,262 40,280 70,250 110,238 140,225 170,185 190,165 215,175 235,205 250,270 265,320 285,350 300,366 340,365 370,375 400,435 420,450 460,435 500,435 530,405 560,370 595,340 610,270 630,200 650,165 670,175 690,200 705,220 715,265 725,332 745,335 765,360 775,395 795,450 815,480 850,490 870,510 890,550 915,575 935,600 950,612 975,575 1010,545 1030,560 1045,540 1070,540 1100,510 1125,495 1150,505 1180,450 1192,430 1198,370` },
{ ox: 1180, oy: 480,
c: `r3,355,358,384,390 g13,364,370,402,404 g19,315,318,345,352 g28,316,325,330,334 g34,318,326,330,360 g44,315,317,318,320 r55,70,74,160,180 g61,150,152,164,240 g67,125,160,168,170 r76,158,162,166,178 r82,160,162,178,180 g88,170,178,180,182 r94,246,248,264,266 g109,228,230,246,248 r118,228,238,244,246 r124,132,142,262,282 g133,195,197,230,235 g143,196,197,199,210 r151,200,204,280,280 g157,200,212,240,245 g163,176,178,226,248 r172,195,198,246,248 g179,158,160,180,205 g184,140,182,204,212 r193,160,170,178,180 r199,142,160,176,178 g207,246,248,250,250 r214,236,240,250,285 r220,236,250,316,318 r232,200,204,236,240 r241,235,240,260,300 r253,245,248,260,308 g262,300,306,308,318 g280,258,259,262,272 g289,195,198,255,268 r298,240,250,260,262 r310,210,228,240,245 r316,240,255,264,266 g322,226,230,256,260 g334,228,230,248,250 g344,245,250,255,262 r352,226,230,324,326 g364,296,314,334,352 g373,296,300,316,345 g379,245,250,268,290 r391,296,318,338,354 g400,342,343,345,346 g406,246,250,324,336 g416,268,306,308,308 g427,238,240,246,248 r436,246,248,275,278 r442,246,248,290,292 r450,248,258,306,310 r460,222,256,332,336 r470,284,308,314,318 g475,255,258,334,338 r481,298,314,352,358 g490,262,306,350,358 g496,306,310,352,360 g511,278,282,290,292 r517,255,256,276,280 r525,260,266,276,280 g535,274,276,280,300 r541,285,288,300,305 g544,284,286,320,325 g559,278,282,284,336 g572,280,281,282,282 r592,332,334,342,345 r607,314,316,344,346 r619,314,318,358,360 g628,285,290,316,320 g634,280,290,292,316 g644,296,298,300,302 g650,150,152,298,318 r655,140,142,246,248 r661,246,248,280,282 r673,264,266,284,285 r685,246,262,298,308 r691,240,250,260,290 r703,245,248,280,285 g715,250,256,285,290 r720,246,256,276,285 r727,270,274,290,300 r733,274,276,296,298 r739,274,278,326,328 r745,300,302,330,334 r751,322,324,348,352 r760,342,345,380,406 r766,345,352,436,438 g772,370,386,432,492 r778,355,378,402,415 r787,358,360,472,474 g793,418,422,436,445 g802,420,421,422,422 g814,420,421,422,465 g828,420,421,422,422 r837,420,422,458,460 r843,434,436,474,474 r855,434,450,458,460 r862,442,445,482,490 g868,440,446,514,542 r877,435,436,444,460 r889,480,482,506,532 g898,490,490,500,514 g904,505,532,542,544 r910,450,462,504,515 g928,500,505,507,508 r934,470,472,522,524 r940,470,472,522,524 r946,455,470,516,520 g958,450,508,512,520 g967,450,490,514,522 r976,490,490,500,500 r988,488,490,522,542 g994,480,484,520,526 g1000,484,486,522,528 g1006,476,490,540,542 r1015,450,454,508,510 r1021,476,480,520,526 r1027,486,490,540,542 r1036,488,490,522,525 r1042,500,506,520,524 r1048,498,505,520,524 g1057,490,494,520,524 r1069,490,515,520,542 r1078,516,522,532,534 g1084,488,520,528,532 g1096,514,518,526,570 g1105,480,482,542,545 g1117,445,446,486,505 r1126,452,454,472,474 r1138,482,490,500,505 r1150,495,500,514,526 r1156,495,506,526,530 r1162,498,514,538,540 g1174,518,520,548,550 g1180,513,515,516,516 r1186,520,522,540,542 r1196,538,542,552,560`,
e: `0,395 25,385|48,374 65,350 86,332|107,318 135,300 157,292|178,278 200,266 230,268|250,267 280,272 312,263|335,262 370,265 388,268|420,272 445,270 474,274|498,283 535,284 553,287|580,286 605,292 640,298|660,287 700,287 725,285|750,290 765,300 788,316|811,333 835,346 860,363|880,378 905,398 928,410|950,427 980,440 1002,449|1026,458 1055,465 1082,476|1103,482 1140,482 1163,486|1187,496 1200,498`,
s: `0,420 38,420|68,402 97,381|127,357 155,340|184,316 212,298|248,275 285,285|380,240 415,246|440,280 475,290|495,292 520,285|580,295 640,298|660,290 730,292|795,310 828,320|861,336 888,351|922,372 952,388|985,404 1010,426|1042,445 1070,466|1105,484 1140,486|1155,498 1200,505|55,340 62,305|70,268 82,238|108,208 120,198 132,215|148,240 175,225|215,215 240,240|260,270 290,285|305,265 345,250|355,262 380,280|405,290 435,280|450,270 480,290|520,275 560,290|600,305 635,300|762,315 778,345|785,360 812,405|835,430 860,445|895,465 920,488|950,510 985,505|1000,495 1040,500|1090,512 1115,505`,
p: `0,402 25,380|35,378 50,370 65,335|84,308 125,270|137,250 175,220|200,208 225,225 248,230|270,243 315,248|340,262 375,270|415,255 460,270|500,285 550,292|580,295 610,304 640,300|660,292 725,287|745,285 765,288 788,318|802,335 840,376|857,400 893,440|910,455 960,487|985,498 1050,500|1070,508 1120,508|1150,506 1200,508`,
b: `0,385 20,360 45,340 55,280 65,220 80,195 90,192 105,230 130,210 150,215 175,230 195,192 210,225 230,250 260,260 280,290 295,255 315,250 345,250 365,280 400,300 425,270 455,285 490,310 530,280 560,290 600,320 635,320 650,265 665,255 690,265 720,262 745,290 770,350 795,410 830,415 855,445 880,460 910,500 950,510 1000,495 1030,505 1090,520 1110,490 1130,480 1150,505 1175,520 1200,545` },
{ ox: 1540, oy: 530,
c: `g4,340,366,370,385 g10,358,372,384,386 g16,348,374,382,420 g25,330,335,390,408 r31,338,342,365,378 g37,294,296,335,345 r46,302,305,320,324 r58,335,340,354,356 g67,345,350,372,375 r73,344,346,374,376 r82,348,360,390,392 r88,360,366,382,400 g94,370,374,400,402 g100,362,363,364,365 r106,370,374,390,402 r112,384,385,390,392 r118,384,390,400,405 r121,395,402,408,410 g127,372,373,374,375 r136,390,410,430,435 r142,408,415,460,464 r148,422,430,460,475 r154,430,440,480,508 g163,450,465,480,484 g169,438,452,475,480 r175,450,478,486,488 r181,475,480,488,488 r190,435,480,488,490 r196,484,486,496,498 g205,468,470,478,480 g217,425,440,472,480 r226,428,460,485,490 r232,462,464,488,490 g239,468,470,472,474 g247,475,488,490,492 g253,485,490,496,508 g259,448,450,482,490 g265,408,410,460,465 r274,370,374,398,442 r280,294,370,380,400 r286,340,354,400,402 r295,405,410,425,480 g301,408,410,440,445 r307,438,442,488,490 r313,450,460,470,488`,
e: `22,331 50,331 82,335|105,344 130,350 155,367|180,382 205,396 230,407|253,420 280,418 310,420`,
s: `70,348 125,355|158,369 190,379|225,390 257,402|285,412 313,414|20,338 52,340|127,375 148,402|172,433 190,460|225,472 255,478|277,448 302,438|0,375 40,358`,
p: `0,357 45,357|70,357 110,358 130,365|148,375 170,395 188,415|207,433 235,448 258,467|280,462 312,452`,
b: `0,365 35,345 55,335 75,360 100,375 125,390 145,415 160,450 180,470 205,478 240,468 262,462 275,430 290,415 305,430 313,446` }];

const NS = 'http://www.w3.org/2000/svg';
const byId = id => document.getElementById(id);
function add(parent, tag, attrs, text) {
  const n = document.createElementNS(NS, tag);
  for (const k in attrs) n.setAttribute(k, attrs[k]);
  if (text) n.textContent = text;
  parent.appendChild(n);
}
const price = byId('price');
const colours = { g: ['#109610', '#56d656'], r: ['#9c2424', '#dc6464'] };
for (const bl of blocks) {
  const X = v => bl.ox + v / 3, Y = v => bl.oy + v / 3;
  for (const t of bl.c.split(/\s+/)) {
    const [x, hi, top, bot, lo] = t.slice(1).split(',').map(Number);
    const [edge, fill] = colours[t[0]];
    const px = Math.floor(X(x)), ry = v => Math.round(Y(v));
    add(price, 'rect', { x: px, y: ry(hi), width: 1, height: Math.max(1, ry(lo) - ry(hi)), fill: edge });
    const h = Math.max(1, ry(bot) - ry(top));
    add(price, 'rect', { x: px - 1, y: ry(top), width: 3, height: h, fill: edge });
    if (h > 2) add(price, 'rect', { x: px, y: ry(top) + 1, width: 1, height: h - 2, fill });
  }
  const path = s => s.split('|').map(seg => 'M' + seg.trim().split(' ').map(p => {
    const [a, b] = p.split(','); return X(+a).toFixed(1) + ' ' + Y(+b).toFixed(1);
  }).join('L')).join('');
  const line = (s, stroke, extra) => add(price, 'path', Object.assign({ d: path(s), fill: 'none', stroke, 'stroke-width': 1 }, extra));
  line(bl.b, '#6666ff', { 'stroke-dasharray': '3 3' });
  line(bl.s, '#dd6666');
  line(bl.p, '#ff3366');
  line(bl.e, '#222');
}
add(price, 'path', { d: 'M39.5 279.800L1809 637.600', stroke: '#1414ff', 'stroke-width': 1.1, 'stroke-dasharray': '20 8' });
add(price, 'path', { d: 'M1651 647V553', stroke: '#2eb22e', 'stroke-width': 2 });
add(price, 'path', { d: 'M1651 545L1657.500 556H1645Z', fill: '#2eb22e' });

// Price scale
const axis = byId('priceAxis');
for (let i = 0; i < 15; i++) {
  const y = 43.35 + 57.66 * i, v = +(1.5 - i / 10).toFixed(1);
  if (v === 0.4) continue;
  add(axis, 'path', { d: `M1878 ${Math.floor(y)}.5h4`, stroke: '#7b949e' });
  add(axis, 'text', { x: 1884, y: Math.floor(y) + 4, class: 'lbl' + (v * 10 % 5 === 0 ? ' bold' : '') }, String(v));
}
[[668.5, '#dd6666'], [674.5, '#dd6666'], [677.5, '#7b949e'], [679.5, '#6666ff'], [681.5, '#ff3366'], [686.5, '#000']]
  .forEach(([y, c]) => add(axis, 'path', { d: `M1878 ${y}h4`, stroke: c }));
function tag(y, w, h, fill, text, colour, ty, size) {
  add(axis, 'rect', { x: 1882.5, y, width: w, height: h, fill, stroke: '#7b949e' });
  add(axis, 'text', { x: 1884, y: ty, class: 'lbl', fill: colour, style: `font-size:${size}px` }, text);
}
tag(684.5, 26, 11, '#ffcc22', '0.385', '#000', 694.5, 9.5);
tag(657.5, 36, 11, '#dde6fa', '0.4170', '#dd6666', 668, 11);
tag(668.5, 36, 8, '#dde6fa', '0.4050', '#dd6666', 678.5, 11);
tag(674.5, 36, 13, '#dde6fa', '0.3930', '#ff3366', 685, 11);

// Volume bars: x -> height for the larger sessions, the rest vary around a low base
const vol = byId('volume');
const peaks = { 52: 5, 90: 8, 99: 5, 182: 11, 212: 6, 221: 8, 228: 7, 237: 12, 248: 8, 265: 14, 267: 26, 269: 8, 322: 7, 341: 10, 345: 7, 350: 9, 380: 6, 536: 38, 539: 11, 542: 6, 551: 8, 581: 6, 643: 12, 653: 6, 661: 5, 702: 5, 762: 10, 814: 5, 863: 5, 1009: 6, 1013: 5, 1045: 6, 1198: 9, 1200: 10, 1224: 5, 1398: 8, 1401: 5, 1447: 5, 1587: 7, 1590: 8, 1612: 5, 1629: 7, 1634: 6 };
let seed = 17;
const rnd = () => (seed = (seed * 16807) % 2147483647) / 2147483647;
const bar = (x, h) => add(vol, 'rect', { x, y: 972 - h, width: 1, height: h, fill: [267, 237, 762, 1198, 1200, 341].includes(x) || (rnd() < .45 && h < 30 && h !== 11 && h !== 14) ? '#56cf5e' : '#e06a6a' });
for (let x = 34; x < 1645; x += rnd() < .4 ? 3 : 2) bar(x, 1 + Math.floor(Math.pow(rnd(), 3) * (x > 200 && x < 360 ? 6 : 4)));
for (const x in peaks) bar(+x, peaks[x]);
for (let x = 147; x < 1640; x += 24) {
  const y = x > 215 && x < 380 ? 968.5 : x > 530 && x < 700 ? 969.5 : 970.5;
  add(vol, 'path', { d: `M${x} ${y}h12`, stroke: '#dd6666' });
}

// Time scale
const time = byId('timeAxis');
const labels = 'Sep 80.5,Oct 131.5,Nov 182.5,Dec 230.5,2021 278,Feb 322.5,Mar 368,Apr 421.5,May 467.5,Jun 516.5,Jul 564.5,Aug 613.5,Sep 663.5,Oct 711.5,Nov 755.5,Dec 804.5,2022 847,Feb 891.5,Mar 935.5,Apr 979.5,May 1027.5,Jun 1078.5,Jul 1124.5,Aug 1172.5,Sep 1218.5,Oct 1261.5,Nov 1301.5,Dec 1350.5,2023 1384,Feb 1426.5,Mar 1472.5,Apr 1524.5,May 1564.5,Jun 1617.5,Jul 1661.5,Aug 1709.5,Sep 1762.5,Oct 1810.5,Nov 1861.5';
labels.split(',').forEach(s => {
  const [m, x] = s.split(' ');
  add(time, 'path', { d: `M${Math.floor(x)}.5 990v3`, stroke: '#7b949e' });
  add(time, 'text', { x, y: 1003, class: 'tm' + (m > '2' && m < '3' ? ' bold' : '') }, m);
});
```
